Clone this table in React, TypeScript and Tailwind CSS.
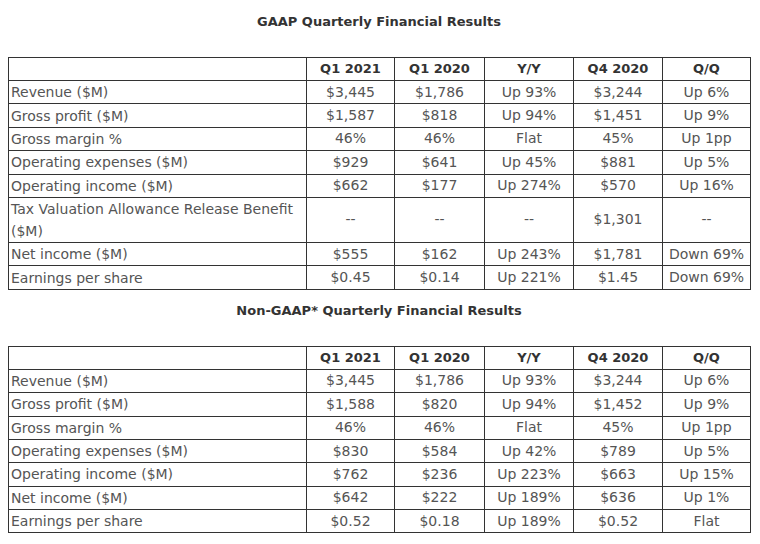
// Two quarterly financial-results tables (GAAP and Non-GAAP), as shown in a
// shareholder letter. Plain bordered tables, centered bold titles.

type Row = { label: string; cells: string[]; tall?: boolean };

const HEADERS = ["Q1 2021", "Q1 2020", "Y/Y", "Q4 2020", "Q/Q"];

const GAAP: Row[] = [
  { label: "Revenue ($M)", cells: ["$3,445", "$1,786", "Up 93%", "$3,244", "Up 6%"] },
  { label: "Gross profit ($M)", cells: ["$1,587", "$818", "Up 94%", "$1,451", "Up 9%"] },
  { label: "Gross margin %", cells: ["46%", "46%", "Flat", "45%", "Up 1pp"] },
  { label: "Operating expenses ($M)", cells: ["$929", "$641", "Up 45%", "$881", "Up 5%"] },
  { label: "Operating income ($M)", cells: ["$662", "$177", "Up 274%", "$570", "Up 16%"] },
  {
    label: "Tax Valuation Allowance Release Benefit ($M)",
    cells: ["--", "--", "--", "$1,301", "--"],
    tall: true,
  },
  { label: "Net income ($M)", cells: ["$555", "$162", "Up 243%", "$1,781", "Down 69%"] },
  { label: "Earnings per share", cells: ["$0.45", "$0.14", "Up 221%", "$1.45", "Down 69%"] },
];

const NON_GAAP: Row[] = [
  { label: "Revenue ($M)", cells: ["$3,445", "$1,786", "Up 93%", "$3,244", "Up 6%"] },
  { label: "Gross profit ($M)", cells: ["$1,588", "$820", "Up 94%", "$1,452", "Up 9%"] },
  { label: "Gross margin %", cells: ["46%", "46%", "Flat", "45%", "Up 1pp"] },
  { label: "Operating expenses ($M)", cells: ["$830", "$584", "Up 42%", "$789", "Up 5%"] },
  { label: "Operating income ($M)", cells: ["$762", "$236", "Up 223%", "$663", "Up 15%"] },
  { label: "Net income ($M)", cells: ["$642", "$222", "Up 189%", "$636", "Up 1%"] },
  { label: "Earnings per share", cells: ["$0.52", "$0.18", "Up 189%", "$0.52", "Flat"] },
];

function ResultsTable({ rows }: { rows: Row[] }) {
  return (
    <table className="w-[742px] table-fixed border-collapse border border-[#666] text-[14px] text-[#555]">
      <colgroup>
        <col className="w-[298px]" />
        <col className="w-[88px]" />
        <col className="w-[90px]" />
        <col className="w-[89px]" />
        <col className="w-[89px]" />
        <col className="w-[88px]" />
      </colgroup>
      <thead>
        <tr className="h-[23px]">
          <th className="border border-[#333]" />
          {HEADERS.map((h) => (
            <th key={h} className="border border-[#333] text-center text-[13px] font-bold text-[#333]">
              {h}
            </th>
          ))}
        </tr>
      </thead>
      <tbody>
        {rows.map((r) => (
          <tr key={r.label} className={r.tall ? "h-[45px]" : "h-[23.4px]"}>
            <td className="border border-[#333] pl-[2px] text-left leading-[22px]">{r.label}</td>
            {r.cells.map((c, i) => (
              <td key={i} className="border border-[#333] text-center">
                {c}
              </td>
            ))}
          </tr>
        ))}
      </tbody>
    </table>
  );
}

export default function App() {
  return (
    <div
      className="h-[544px] w-[760px] overflow-hidden bg-white pl-[8px]"
      style={{ fontFamily: '"DejaVu Sans", "Open Sans", sans-serif' }}
    >
      <h2 className="flex h-[57px] w-[742px] items-start justify-center pt-[12px] text-[13px] font-bold text-[#333]">
        GAAP Quarterly Financial Results
      </h2>
      <ResultsTable rows={GAAP} />
      <h2 className="flex h-[56px] w-[742px] items-start justify-center pt-[11px] text-[13px] font-bold text-[#333]">
        Non-GAAP* Quarterly Financial Results
      </h2>
      <ResultsTable rows={NON_GAAP} />
    </div>
  );
}
